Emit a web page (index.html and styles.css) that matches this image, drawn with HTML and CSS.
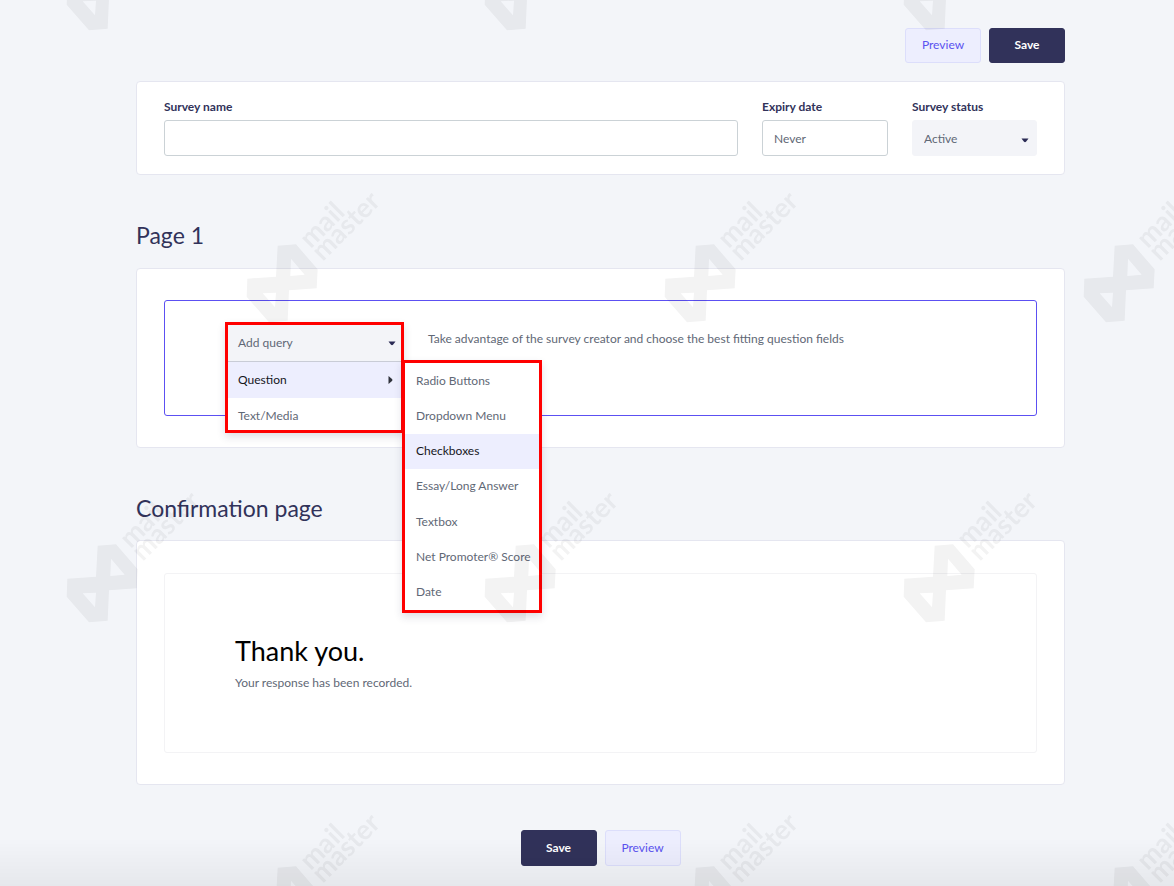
FILE: index.html
```
<!DOCTYPE html>
<html lang="en">
<head>
<meta charset="utf-8">
<meta name="viewport" content="width=device-width, initial-scale=1">
<title>Survey creator</title>
<link rel="stylesheet" href="styles.css">
</head>
<body>
<main class="page">
  <div class="actions actions-top">
    <button type="button" class="btn btn-light">Preview</button>
    <button type="button" class="btn btn-dark">Save</button>
  </div>

  <form class="card settings">
    <div class="field">
      <label for="survey-name">Survey name</label>
      <input id="survey-name" class="control" type="text">
    </div>
    <div class="field">
      <label for="expiry">Expiry date</label>
      <input id="expiry" class="control" type="text" value="Never">
    </div>
    <div class="field">
      <label for="status">Survey status</label>
      <div class="select">
        <select id="status" class="control"><option>Active</option></select>
        <svg class="caret" viewBox="0 0 8 5" aria-hidden="true"><path d="M0.5 0.5h7L5 3.700Q4 4.600 3 3.700Z"/></svg>
      </div>
    </div>
  </form>

  <h2 class="section-title">Page 1</h2>
  <section class="card builder">
    <div class="drop-zone">
      <div class="picker">
        <div class="panel panel-main">
          <button type="button" class="panel-toggle" aria-expanded="true">Add query
            <svg class="caret" viewBox="0 0 8 5" aria-hidden="true"><path d="M0.5 0.5h7L5 3.700Q4 4.600 3 3.700Z"/></svg>
          </button>
          <button type="button" class="item item-active">Question
            <svg class="caret-right" viewBox="0 0 5 8" aria-hidden="true"><path d="M0.5 0v8L4 5Q5 4 4 3Z"/></svg>
          </button>
          <button type="button" class="item item-last">Text/Media</button>
        </div>
        <div class="panel panel-sub">
          <button type="button" class="item">Radio Buttons</button>
          <button type="button" class="item">Dropdown Menu</button>
          <button type="button" class="item item-active">Checkboxes</button>
          <button type="button" class="item">Essay/Long Answer</button>
          <button type="button" class="item">Textbox</button>
          <button type="button" class="item">Net Promoter® Score</button>
          <button type="button" class="item">Date</button>
        </div>
      </div>
      <p class="hint">Take advantage of the survey creator and choose the best fitting question fields</p>
    </div>
  </section>

  <h2 class="section-title section-title-next">Confirmation page</h2>
  <section class="card confirmation">
    <div class="message">
      <h3>Thank you.</h3>
      <p>Your response has been recorded.</p>
    </div>
  </section>

  <div class="actions actions-bottom">
    <button type="button" class="btn btn-dark">Save</button>
    <button type="button" class="btn btn-light">Preview</button>
  </div>
</main>
<div class="fade"></div>
<svg class="watermark" aria-hidden="true">
  <defs>
    <symbol id="mark" viewBox="0 0 600 450">
      <path fill-rule="evenodd" d="M173 197L228 193L293 268L290 325L207 331L203 422L147 427L80 350L82 296L168 290ZM213 236L254 284L211 288ZM128 340L168 338L165 382Z"/>
      <text class="brand" transform="translate(272 208) rotate(-45)">mail</text>
      <text class="brand" transform="translate(308 246) rotate(-45)">master</text>
    </symbol>
  </defs>
  <use href="#mark" x="40" y="-112" width="200" height="150"/>
  <use href="#mark" x="458" y="-112" width="200" height="150"/>
  <use href="#mark" x="877" y="-112" width="200" height="150"/>
  <use href="#mark" x="220" y="180" width="200" height="150"/>
  <use href="#mark" x="638" y="180" width="200" height="150"/>
  <use href="#mark" x="1057" y="180" width="200" height="150"/>
  <use href="#mark" x="40" y="480" width="200" height="150"/>
  <use href="#mark" x="458" y="480" width="200" height="150"/>
  <use href="#mark" x="877" y="480" width="200" height="150"/>
  <use href="#mark" x="220" y="802" width="200" height="150"/>
  <use href="#mark" x="638" y="802" width="200" height="150"/>
  <use href="#mark" x="1057" y="802" width="200" height="150"/>
</svg>
</body>
</html>
```
FILE: styles.css
```
* { box-sizing: border-box; }

body {
  margin: 0;
  background: #f3f5f9;
  color: #5f6876;
  font: 12px/16px Lato, "Open Sans", sans-serif;
}

button, input, select { font: inherit; color: inherit; }
h2, h3, p { margin: 0; }

.page { padding: 28px 109px 20px 136px; }

.actions { display: flex; gap: 8px; }
.actions-top { justify-content: flex-end; margin-bottom: 18px; }
.actions-bottom { justify-content: center; margin-top: 45px; }

.btn {
  width: 76px;
  height: 35px;
  padding: 0 0 2px;
  border: 1px solid #31325a;
  border-radius: 3px;
}
.actions-bottom .btn { height: 36px; padding: 0; }
.btn-dark { background: #31325a; color: #fff; font-weight: 700; }
.btn-light { background: #edeefe; border-color: #dcdefb; color: #5a52f0; }

.card {
  background: #fff;
  border: 1px solid #e5e6f0;
  border-radius: 4px;
}

.settings {
  display: grid;
  grid-template-columns: 1fr 126px 125px;
  gap: 24px;
  padding: 17px 27px 18px;
}
.field { display: flex; flex-direction: column; gap: 5px; }
.field label { color: #31325a; font-weight: 700; }
.control {
  width: 100%;
  height: 36px;
  padding: 0 11px;
  border: 1px solid #cbd2d6;
  border-radius: 3px;
  background: #fff;
}
.select { position: relative; }
.select .control {
  appearance: none;
  padding-top: 2px;
  background: #f3f4f8;
  border-color: #f3f4f8;
}
.caret { width: 8px; height: 5px; fill: #2b2b55; }
.select .caret { position: absolute; right: 8px; top: 18px; pointer-events: none; }
.caret-right { width: 5px; height: 8px; margin-right: 3px; fill: #30323c; }

.section-title {
  margin: 44px 0 17px;
  color: #31325a;
  font-size: 23px;
  line-height: 32px;
  font-weight: 400;
}

.builder { padding: 31px 27px; }
.drop-zone {
  display: flex;
  gap: 24px;
  min-height: 116px;
  padding: 21px 60px;
  border: 1px solid #5c50f2;
  border-radius: 3px;
}
.picker { position: relative; flex: 0 0 179px; }
.hint { padding-top: 9px; }

.panel {
  position: absolute;
  z-index: 1;
  background: #fff;
  border: 3px solid #f00;
  box-shadow: 0 4px 8px rgba(40, 40, 80, 0.15);
}
.panel-main { top: 0; left: 0; width: 179px; }
.panel-sub {
  top: 38px;
  left: 177px;
  width: 140px;
  height: 253px;
  display: grid;
  grid-auto-rows: 1fr;
}
.panel button {
  display: flex;
  align-items: center;
  justify-content: space-between;
  width: 100%;
  padding: 0 5px 0 10px;
  border: 0;
  background: none;
  text-align: left;
}
.panel .panel-toggle {
  height: 37px;
  background: #f3f4f8;
  border-bottom: 1px solid #c9ccd6;
}
.panel-main .item { height: 36px; }
.panel-main .item-last { height: 32px; padding-top: 3px; }
.panel-sub .item { padding: 0 0 0 11px; }
.panel .item-active { background: #edeefe; color: #15161c; }

.section-title-next { margin-top: 44px; margin-bottom: 16px; }
.confirmation { padding: 32px 27px 31px; }
.message {
  min-height: 180px;
  padding: 59px 70px;
  border: 1px solid #f3f3f5;
  border-radius: 3px;
}
.message h3 {
  margin-bottom: 6px;
  color: #000;
  font-size: 27px;
  line-height: 36px;
  font-weight: 400;
}

.fade {
  position: fixed;
  inset: auto 0 0;
  height: 48px;
  background: linear-gradient(rgba(0, 0, 0, 0), rgba(0, 0, 0, 0.05));
  pointer-events: none;
}
.watermark {
  position: fixed;
  inset: 0;
  z-index: 2;
  width: 100%;
  height: 100%;
  opacity: 0.048;
  pointer-events: none;
}
.brand { font-size: 82px; font-weight: 700; }
```
